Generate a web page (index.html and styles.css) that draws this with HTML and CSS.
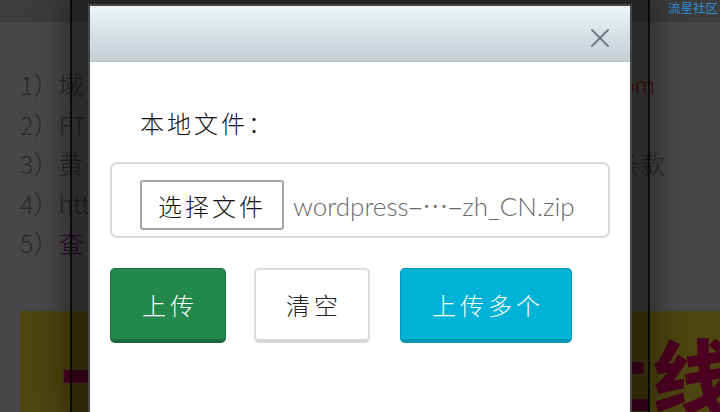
FILE: index.html
```html
<!DOCTYPE html>
<html lang="zh-CN">
<head>
<meta charset="utf-8">
<title>上传文件</title>
<link rel="stylesheet" href="styles.css">
</head>
<body>
<div class="page">
  <div class="topbar"><span class="brand">流星社区</span></div>
  <ol class="steps">
    <li class="step"><span>1）域</span><span class="tail tail-red">om</span></li>
    <li class="step"><span>2）FT</span></li>
    <li class="step"><span>3）黄</span><span class="tail tail-dark">条款</span></li>
    <li class="step"><span>4）htt</span></li>
    <li class="step"><span>5）<span class="purple">查</span></span></li>
  </ol>
  <div class="banner"><span>一</span><span>上线</span></div>
</div>

<div class="overlay"></div>
<div class="shade"></div>

<div class="modal">
  <div class="modal-head">
    <svg class="close" viewBox="0 0 18 18" width="18" height="18" aria-label="关闭">
      <path d="M1 1 L17 17 M17 1 L1 17" stroke="#6b757b" stroke-width="1.8" fill="none" stroke-linecap="square"/>
    </svg>
  </div>
  <div class="modal-body">
    <div class="label">本地文件：</div>
    <div class="filebox">
      <button class="pick" type="button">选择文件</button>
      <span class="fname">wordpress<span class="cjk">–…–</span>zh_CN.zip</span>
    </div>
    <div class="actions">
      <button class="btn btn-green" type="button">上传</button>
      <button class="btn btn-white" type="button">清空</button>
      <button class="btn btn-cyan" type="button">上传多个</button>
    </div>
  </div>
</div>
</body>
</html>
```

FILE: styles.css
```css
html, body {
  margin: 0;
  padding: 0;
  width: 720px;
  height: 412px;
  overflow: hidden;
}
body {
  background: #efeff3;
  font-family: "Noto Sans CJK SC", "Noto Sans", sans-serif;
}
.page {
  width: 720px;
}
.topbar {
  height: 22px;
  background: #3c3c3c;
  display: flex;
  justify-content: flex-end;
  align-items: flex-start;
}
.brand {
  font-size: 12.5px;
  line-height: 15px;
  color: #2d8fda;
  padding-right: 2px;
}
.steps {
  list-style: none;
  margin: 43px 0 0 0;
  padding: 0 0 0 20px;
  font-size: 25px;
  line-height: 39.5px;
  color: #868686;
  font-weight: 300;
}
.step {
  display: flex;
  justify-content: space-between;
  width: 645px;
  white-space: nowrap;
}
.tail-red {
  color: #ff2020;
  font-family: "Lato", sans-serif;
  font-size: 25px;
  margin-right: 10px;
}
.tail-dark {
  color: #868686;
}
.purple {
  color: #a022b4;
}
.banner {
  margin: 48px 0 0 20px;
  width: 720px;
  height: 120px;
  padding: 16px 8px 0 41px;
  box-sizing: border-box;
  background: #ffe635;
  display: flex;
  justify-content: space-between;
  font-size: 80px;
  line-height: 90px;
  font-weight: 900;
  color: #fa006a;
}

/* page dimming overlay (top bar stays above it) */
.overlay {
  position: fixed;
  left: 0;
  top: 22px;
  right: 0;
  bottom: 0;
  background: rgba(0, 0, 0, 0.7);
}

/* dark layer behind the dialog */
.shade {
  position: fixed;
  left: 70px;
  top: 0;
  width: 576px;
  height: 412px;
  background: rgba(0, 0, 0, 0.4);
  border-left: 2px solid rgba(0, 0, 0, 0.75);
  border-right: 2px solid rgba(0, 0, 0, 0.75);
  box-shadow: 0 0 32px 6px rgba(0, 0, 0, 0.4);
}

/* dialog */
.modal {
  position: fixed;
  left: 88px;
  top: 4px;
  width: 540px;
  height: 430px;
  border: 2px solid #474747;
  background: #fff;
}
.modal-head {
  height: 46px;
  padding-top: 9px;
  padding-right: 21px;
  display: flex;
  justify-content: flex-end;
  align-items: center;
  background: linear-gradient(#eef5f8, #c6cdd3);
  border-bottom: 1px solid #b7c0c7;
}
.close {
  display: block;
}
.modal-body {
  padding: 45px 20px 0 20px;
}
.label {
  padding-left: 30px;
  font-size: 24px;
  line-height: 32px;
  letter-spacing: 3px;
  color: #111;
  font-weight: 300;
}
.filebox {
  margin-top: 23px;
  height: 76px;
  box-sizing: border-box;
  border: 2px solid #dadada;
  border-radius: 7px;
  padding: 16px 0 0 28px;
  display: flex;
  align-items: flex-start;
  gap: 9px;
}
.pick {
  width: 144px;
  height: 50px;
  margin: 0;
  padding: 0;
  border: 2px solid #a3a3a3;
  border-radius: 3px;
  background: #fff;
  font-family: "Noto Sans CJK SC", sans-serif;
  font-size: 24px;
  font-weight: 300;
  letter-spacing: 3px;
  color: #111;
  box-sizing: border-box;
}
.fname {
  font-family: "Lato", sans-serif;
  font-size: 26px;
  font-weight: 300;
  line-height: 50px;
  color: #6a6a6a;
  white-space: nowrap;
}
.cjk {
  font-family: "Noto Sans CJK SC", sans-serif;
}
.actions {
  margin-top: 30px;
  display: flex;
  align-items: flex-start;
}
.btn {
  height: 75px;
  margin: 0;
  padding: 0;
  border-radius: 5px;
  font-family: "Noto Sans CJK SC", sans-serif;
  font-size: 24px;
  font-weight: 300;
  letter-spacing: 4px;
  box-sizing: border-box;
  text-indent: 4px;
}
.btn-green {
  width: 116px;
  background: #22884b;
  color: #fff;
  border: 1px solid #1c7340;
  border-bottom: 4px solid #1b6c3c;
}
.btn-white {
  width: 116px;
  margin-left: 28px;
  background: #fff;
  color: #222;
  border: 2px solid #dddddd;
  border-bottom: 4px solid #d8d8d8;
}
.btn-cyan {
  width: 172px;
  margin-left: 30px;
  background: #00b2d5;
  color: #fff;
  border: 1px solid #0099b8;
  border-bottom: 4px solid #0097b5;
}
```
